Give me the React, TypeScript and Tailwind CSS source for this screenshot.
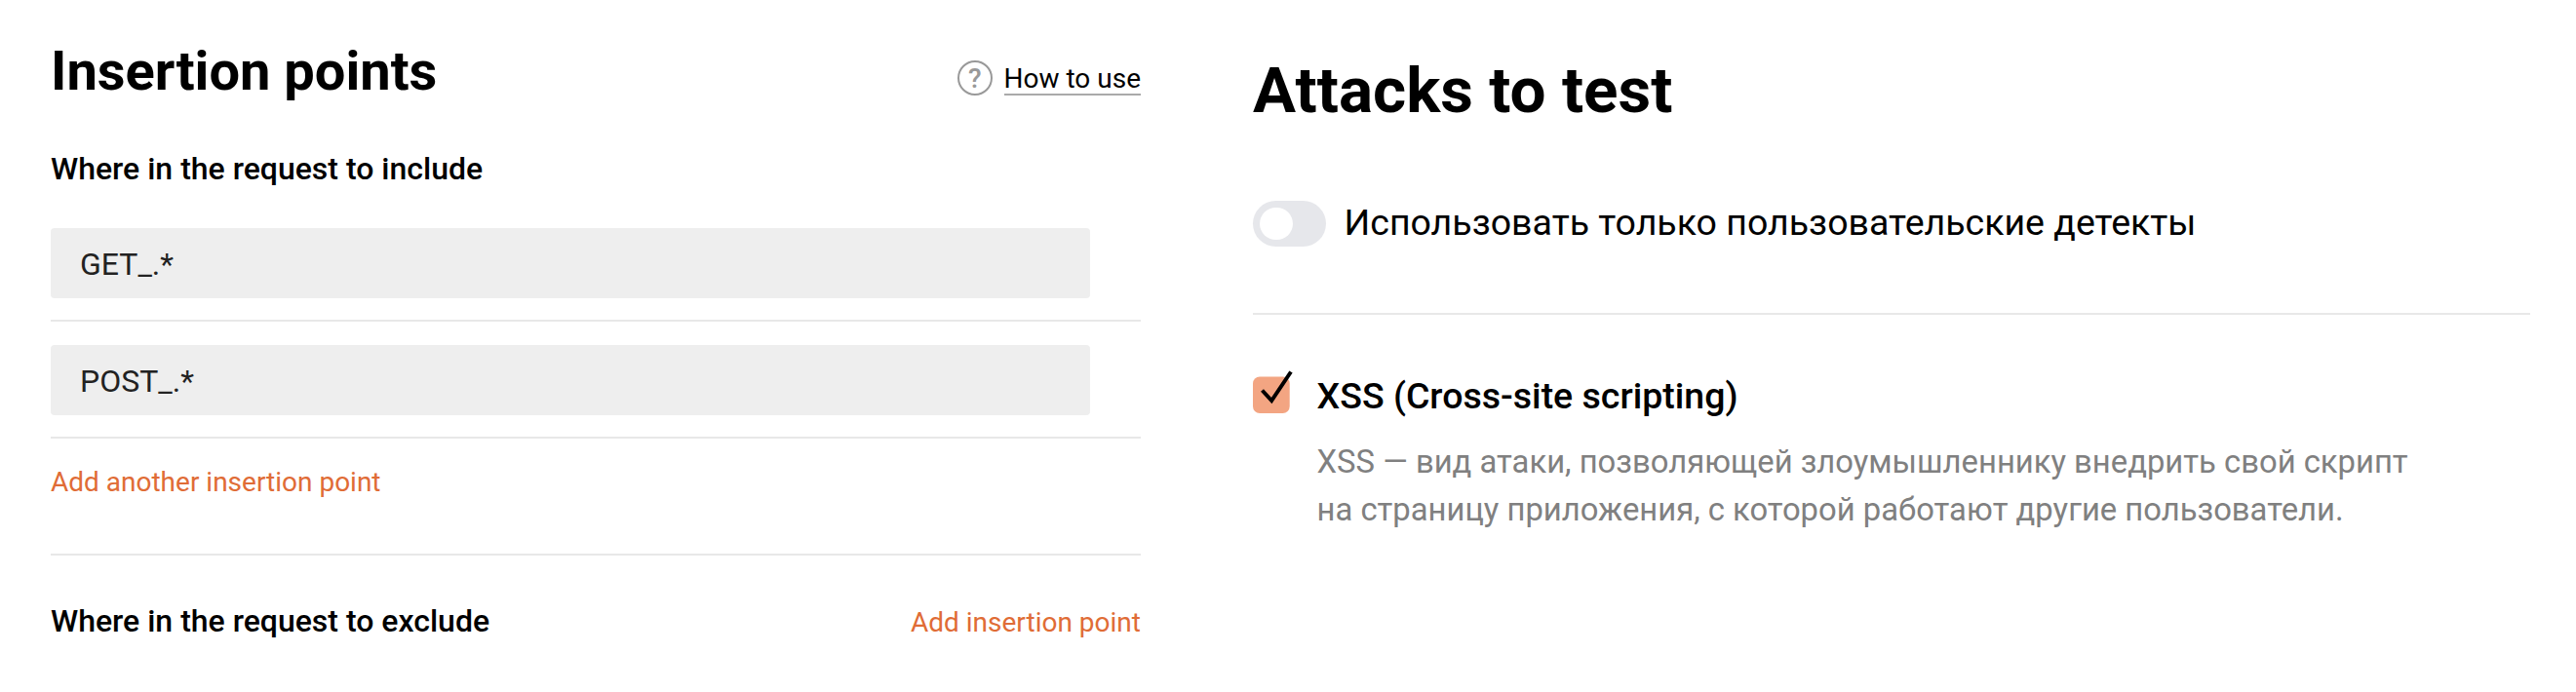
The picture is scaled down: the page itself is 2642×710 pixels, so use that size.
export default function App() {
  return (
    <div className="flex h-[710px] w-[2642px] overflow-hidden bg-white font-['Roboto',sans-serif] text-black">
      <section className="ml-[52px] flex w-[1118px] shrink-0 flex-col">
        <header className="mt-[38px] flex h-[70px] items-start justify-between">
          <h1 className="text-[56px] leading-[70px] font-bold">Insertion points</h1>
          <a className="mt-6 flex items-start gap-3 text-[28px]">
            <svg width="36" height="36" viewBox="0 0 36 36" fill="none">
              <circle cx="18" cy="18" r="17" stroke="#999" strokeWidth="2" />
              <text x="17.7" y="28" textAnchor="middle" fontSize="28" fontWeight="500" fill="#999">?</text>
            </svg>
            <span className="h-9 border-b-2 border-[#aaa] pt-[2px] leading-[33px]">How to use</span>
          </a>
        </header>
        <h2 className="mt-[44px] text-[32px] leading-[42px] font-medium">Where in the request to include</h2>
        <div className="mt-[40px] border-b-2 border-[#e8e8e8] pb-[22px]">
          <div className="flex h-[72px] w-[1066px] items-center rounded bg-[#eee] pt-[2px] pl-[30px] text-[32px] text-[#222]">GET_.*</div>
        </div>
        <div className="mt-6 border-b-2 border-[#e8e8e8] pb-[22px]">
          <div className="flex h-[72px] w-[1066px] items-center rounded bg-[#eee] pt-[2px] pl-[30px] text-[32px] text-[#222]">POST_.*</div>
        </div>
        <div className="h-[120px] border-b-2 border-[#e8e8e8] pt-6 text-[28px] leading-[42px] text-[#e06c36]">Add another insertion point</div>
        <div className="mt-[46px] flex items-baseline justify-between leading-[42px]">
          <h2 className="text-[32px] font-medium">Where in the request to exclude</h2>
          <span className="text-[28px] text-[#e06c36]">Add insertion point</span>
        </div>
      </section>
      <section className="ml-[115px] flex w-[1310px] shrink-0 flex-col">
        <h1 className="mt-[53px] text-[65.6px] leading-[79px] font-bold">Attacks to test</h1>
        <div className="mt-[74px] flex h-[47px] items-start gap-[18.5px] text-[37.5px] leading-[44px]">
          <span className="flex h-[47px] w-[75px] items-center rounded-full bg-[#e6e7eb] pl-[7px]">
            <i className="size-[33.5px] rounded-full bg-white" />
          </span>
          Использовать только пользовательские детекты
        </div>
        <div className="mt-[68px] h-[2px] bg-[#e8e8e8]" />
        <div className="mt-[57px] flex">
          <svg width="42" height="48" viewBox="0 0 42 48" className="shrink-0" fill="none">
            <rect y="6.5" width="37.7" height="37.5" rx="7" fill="#f3a582" />
            <path d="M9.5 20.5L19.2 31L39 1.5" stroke="#000" strokeWidth="4" />
          </svg>
          <div className="ml-[23.5px]">
            <h2 className="text-[37.5px] leading-[52px] font-medium">XSS (Cross-site scripting)</h2>
            <p className="mt-[18px] text-[32.8px] leading-[49px] text-[#808080]">
              XSS — вид атаки, позволяющей злоумышленнику внедрить свой скрипт<br />
              на страницу приложения, с которой работают другие пользователи.
            </p>
          </div>
        </div>
      </section>
    </div>
  );
}
